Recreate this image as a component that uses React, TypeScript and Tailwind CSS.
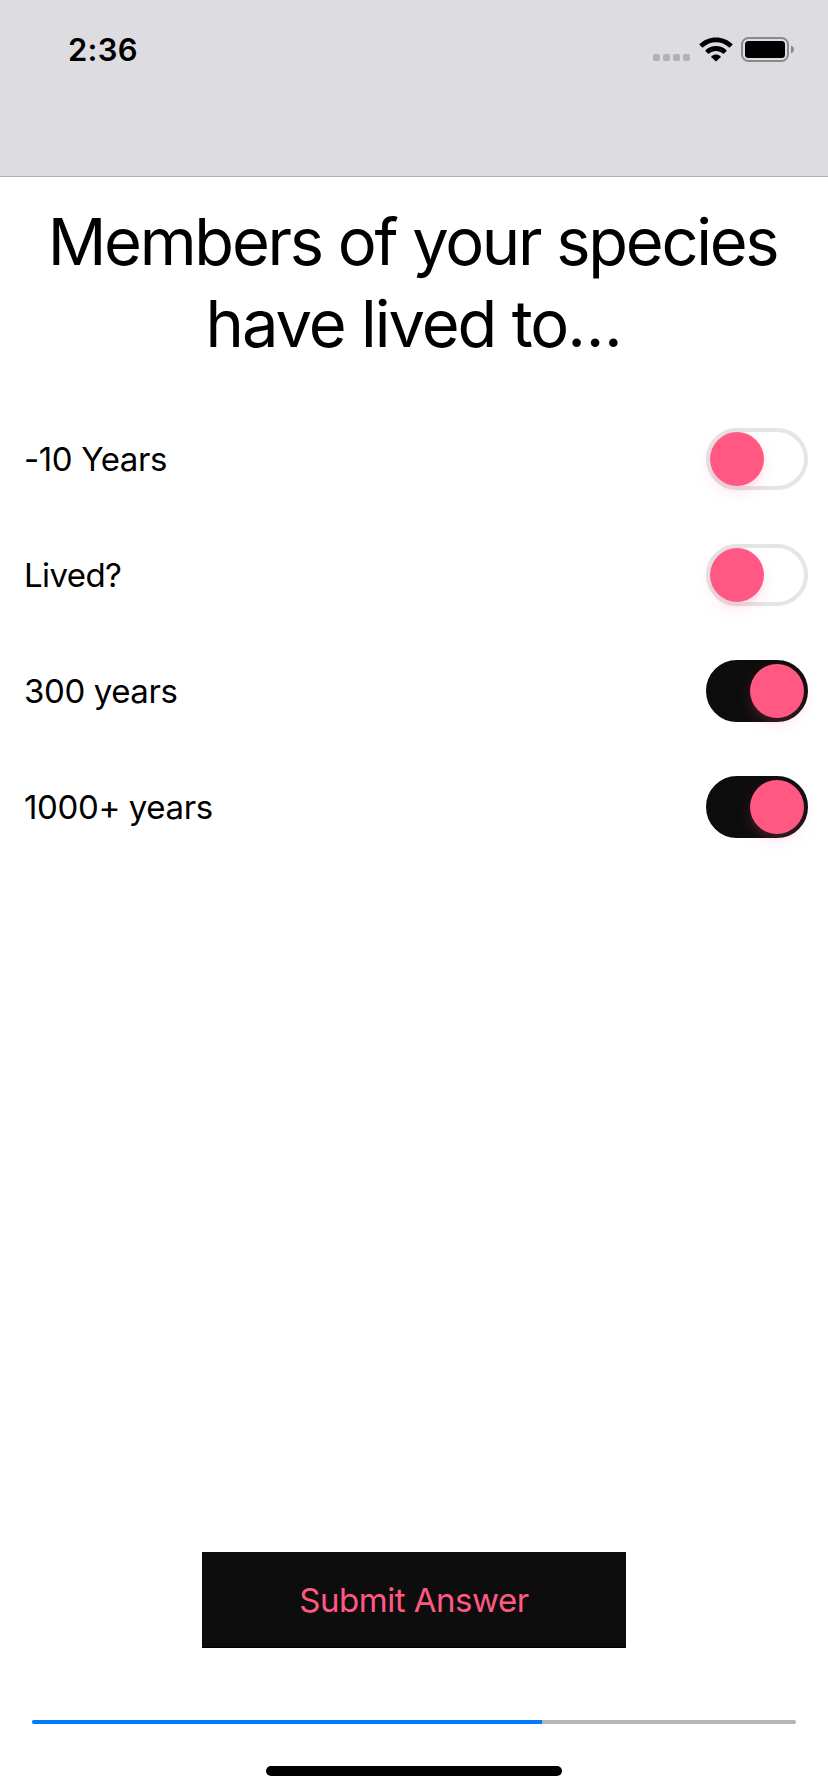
import React, { useState } from "react";

type Option = { label: string; tracking: string; on: boolean };

const initialOptions: Option[] = [
  { label: "-10 Years", tracking: "tracking-[-0.385px]", on: false },
  { label: "Lived?", tracking: "tracking-[-0.6px]", on: false },
  { label: "300 years", tracking: "tracking-[-0.4px]", on: true },
  { label: "1000+ years", tracking: "tracking-[-0.36px]", on: true },
];

function StatusBar() {
  return (
    <div className="flex h-[99px] items-center justify-between pr-[34px] pl-[68px]">
      <span className="text-[31px] leading-[38px] font-semibold tracking-[0.3px]">2:36</span>
      <div className="flex items-center">
        <div className="mt-[16px] mr-[9px] flex gap-[3px]">
          {[0, 1, 2, 3].map((i) => (
            <span key={i} className="size-[7px] rounded-[2px] bg-[#b2b1b5]" />
          ))}
        </div>
        <svg className="mr-[8px] h-[25px] w-[34px]" viewBox="0 0 34 25" fill="#000">
          <path d="M17 .4C23.3 .4 29 2.8 33.2 6.8c.4.4.4.8.1 1.2l-2.3 2.3c-.3.4-.8.4-1.2 0C26.4 7.1 21.9 5.2 17 5.2S7.6 7.1 4.2 10.3c-.4.4-.9.4-1.2 0L.7 8c-.3-.4-.3-.8.1-1.2C5 2.8 10.7.4 17 .4Z" />
          <path d="M17 9.1c4 0 7.6 1.5 10.3 3.9.4.4.4.9.1 1.2L25.1 16.5c-.4.4-.8.4-1.2 0-1.9-1.6-4.3-2.6-6.9-2.6s-5 1-6.9 2.6c-.4.4-.8.4-1.2 0L6.6 14.2c-.3-.3-.3-.8.1-1.2C9.4 10.6 13 9.1 17 9.1Z" />
          <path d="M17 17.5c1.7 0 3.2.6 4.4 1.5.4.4.4.8.1 1.2L17.6 24.1c-.4.4-.8.4-1.2 0L12.5 20.2c-.3-.4-.3-.8.1-1.2 1.2-.9 2.7-1.5 4.4-1.5Z" />
        </svg>
        <svg className="h-[25px] w-[53px]" viewBox="0 0 53 25">
          <rect x="1" y="1" width="46" height="23" rx="6.5" fill="none" stroke="#8a898c" strokeWidth="2" />
          <rect x="4" y="4" width="40" height="17" rx="3.5" fill="#000" />
          <path d="M50 8.5c1.8.7 3 2.2 3 4s-1.2 3.3-3 4Z" fill="#8a898c" />
        </svg>
      </div>
    </div>
  );
}

function Toggle({ on, onChange, label }: { on: boolean; onChange: () => void; label: string }) {
  return (
    <button
      type="button"
      role="switch"
      aria-checked={on}
      aria-label={label}
      onClick={onChange}
      className={`flex h-[62px] w-[102px] items-center rounded-full border-4 ${
        on ? "justify-end border-[#0d0d0d] bg-[#0d0d0d]" : "justify-start border-[#e5e5e5] bg-white"
      }`}
    >
      <span className="size-[54px] rounded-full bg-[#ff5983] shadow-[0_6px_16px_rgba(255,89,131,0.15),0_6px_2px_rgba(255,89,131,0.06)]" />
    </button>
  );
}

export default function App() {
  const [options, setOptions] = useState(initialOptions);
  const toggle = (index: number) =>
    setOptions(options.map((o, i) => (i === index ? { ...o, on: !o.on } : o)));

  return (
    <div className="flex h-[1792px] w-[828px] flex-col bg-white font-[Inter,sans-serif] text-black">
      <header className="h-[177px] border-b border-[#b1b0b3] bg-[#dddce1]">
        <StatusBar />
      </header>

      <h1 className="mt-[24px] flex flex-col items-center pr-[3px] text-[65px] leading-[82px] font-normal whitespace-nowrap">
        <span className="tracking-[-2.28px]">Members of your species</span>
        <span className="pl-[3px] tracking-[-2px]">
          have lived to<span className="tracking-[-0.3px]">...</span>
        </span>
      </h1>

      <ul className="mt-[63px] flex flex-col gap-[54px] pr-[20px] pl-[24px]">
        {options.map((o, i) => (
          <li key={o.label} className="flex h-[62px] items-center justify-between">
            <span className={`text-[33px] leading-[40px] ${o.tracking}`}>{o.label}</span>
            <Toggle on={o.on} label={o.label} onChange={() => toggle(i)} />
          </li>
        ))}
      </ul>

      <footer className="mt-auto flex flex-col items-center">
        <button
          type="button"
          className="h-[96px] w-[424px] border-b border-black bg-[#0d0d0d] pt-[2px] text-[33px] tracking-[-0.48px] text-[#ff5983]"
        >
          Submit Answer
        </button>
        <div className="mt-[72px] h-1 w-[764px] overflow-hidden rounded-full bg-[#b5b5b5]">
          <div className="h-full w-[510px] bg-[#007aff]" />
        </div>
        <div className="mt-[42px] mb-[16px] h-[10px] w-[296px] rounded-full bg-black" />
      </footer>
    </div>
  );
}
